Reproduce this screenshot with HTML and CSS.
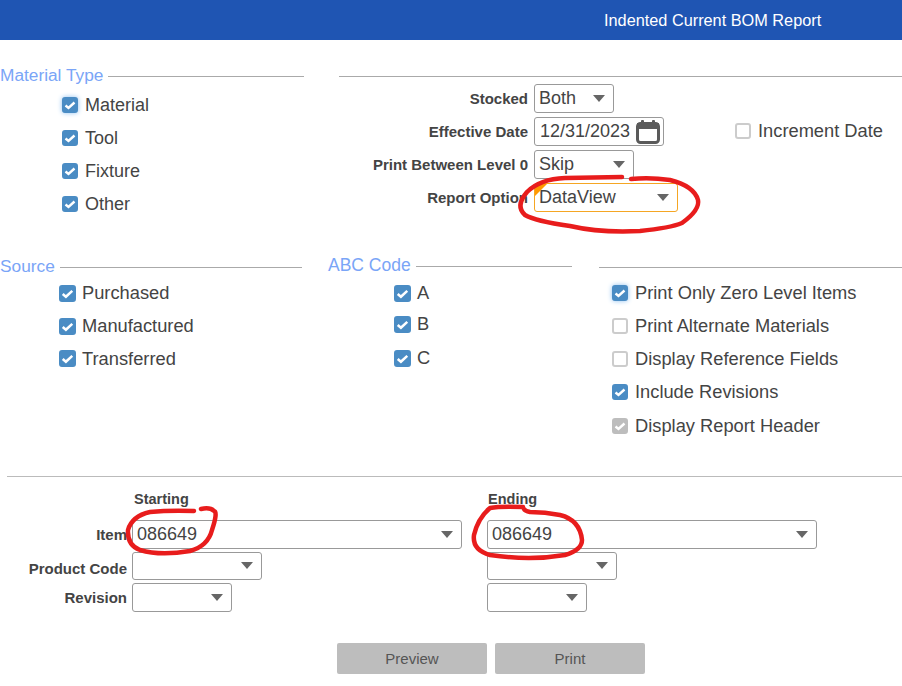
FILE: index.html
```html
<!DOCTYPE html>
<html lang="en">
<head>
    <meta charset="UTF-8">
    <meta name="viewport" content="width=device-width, initial-scale=1.0">
    <title>Indented Current BOM Report</title>
    <link rel="stylesheet" href="styles.css">
</head>
<body>
    <svg class="defs" aria-hidden="true">
        <symbol id="tick" viewBox="0 0 16 16">
            <path d="M3.5 8.5 L6.5 11 L12.5 5.5" fill="none" stroke="#fff" stroke-width="2.4"/>
        </symbol>
    </svg>

    <div class="header">Indented Current BOM Report</div>

    <form class="report">
        <div class="top">
            <div>
                <div class="legend"><span>Material Type</span></div>
                <div class="checks material">
                    <label class="check"><span class="box on focus"><svg><use href="#tick"/></svg></span>Material</label>
                    <label class="check"><span class="box on"><svg><use href="#tick"/></svg></span>Tool</label>
                    <label class="check"><span class="box on"><svg><use href="#tick"/></svg></span>Fixture</label>
                    <label class="check"><span class="box on"><svg><use href="#tick"/></svg></span>Other</label>
                </div>
            </div>
            <div>
                <div class="legend"></div>
                <div class="options">
                    <span class="field-label">Stocked</span>
                    <div class="select w80"><span>Both</span><i class="caret"></i></div>
                    <span></span>

                    <span class="field-label">Effective Date</span>
                    <div class="select date">
                        <span>12/31/2023</span>
                        <svg class="calendar" width="24" height="24" viewBox="0 0 24 24">
                            <rect x="1.5" y="3.5" width="21" height="19" rx="3" fill="#fff" stroke="#5a5a5a" stroke-width="3"/>
                            <rect x="1" y="3" width="22" height="6" fill="#5a5a5a"/>
                            <rect x="5" y="0" width="3" height="5" rx="1" fill="#5a5a5a"/>
                            <rect x="16" y="0" width="3" height="5" rx="1" fill="#5a5a5a"/>
                        </svg>
                    </div>
                    <label class="check wide"><span class="box"></span>Increment Date</label>

                    <span class="field-label">Print Between Level 0</span>
                    <div class="select w100"><span>Skip</span><i class="caret"></i></div>
                    <span></span>

                    <span class="field-label">Report Option</span>
                    <div class="select report-option"><span>DataView</span><i class="caret"></i></div>
                    <span></span>
                </div>
            </div>
        </div>

        <div class="middle">
            <div>
                <div class="legend"><span>Source</span></div>
                <div class="checks source">
                    <label class="check"><span class="box on"><svg><use href="#tick"/></svg></span>Purchased</label>
                    <label class="check"><span class="box on"><svg><use href="#tick"/></svg></span>Manufactured</label>
                    <label class="check"><span class="box on"><svg><use href="#tick"/></svg></span>Transferred</label>
                </div>
            </div>
            <div>
                <div class="legend abc-legend"><span>ABC Code</span></div>
                <div class="checks abc">
                    <label class="check"><span class="box on"><svg><use href="#tick"/></svg></span>A</label>
                    <label class="check"><span class="box on"><svg><use href="#tick"/></svg></span>B</label>
                    <label class="check"><span class="box on"><svg><use href="#tick"/></svg></span>C</label>
                </div>
            </div>
            <div>
                <div class="legend"></div>
                <div class="checks print">
                    <label class="check"><span class="box on focus"><svg><use href="#tick"/></svg></span>Print Only Zero Level Items</label>
                    <label class="check"><span class="box"></span>Print Alternate Materials</label>
                    <label class="check"><span class="box"></span>Display Reference Fields</label>
                    <label class="check"><span class="box on"><svg><use href="#tick"/></svg></span>Include Revisions</label>
                    <label class="check"><span class="box disabled"><svg><use href="#tick"/></svg></span>Display Report Header</label>
                </div>
            </div>
        </div>

        <div class="range">
            <span></span>
            <b class="range-head">Starting</b>
            <b class="range-head ending">Ending</b>

            <span class="field-label">Item</span>
            <div class="select w330"><span>086649</span><i class="caret"></i></div>
            <div class="select w330"><span>086649</span><i class="caret"></i></div>

            <span class="field-label low">Product Code</span>
            <div class="select w130"><i class="caret"></i></div>
            <div class="select w130"><i class="caret"></i></div>

            <span class="field-label">Revision</span>
            <div class="select w100"><i class="caret"></i></div>
            <div class="select w100"><i class="caret"></i></div>
        </div>

        <div class="buttons">
            <button type="button">Preview</button>
            <button type="button">Print</button>
        </div>
    </form>

    <!-- red pen marks drawn over the screenshot -->
    <svg class="marks" width="902" height="686" viewBox="0 0 902 686">
        <path d="M622 177 L565 178 Q540 179 527 192 Q515 206 525 215 Q535 221 570 226 Q600 233 640 231 Q670 228 682 223 Q700 210 698 200 Q694 186 670 180 Q650 177 631 179"/>
        <path d="M194 511 Q170 510 150 512 Q132 516 128 530 Q127 545 140 550 Q160 556 190 551 Q208 546 212 530 Q218 512 214 511 Q210 507 201 509"/>
        <path d="M523 507 Q500 506 490 508 Q478 518 474 535 Q472 550 490 555 Q530 561 565 555 Q582 550 582 540 Q580 520 560 515 Q545 512 530 512 Q525 511 524 509"/>
    </svg>
</body>
</html>
```

FILE: styles.css
```css
body {
    position: relative;
    margin: 0;
    font-family: "Liberation Sans", Arial, sans-serif;
    font-size: 18px;
    color: #444;
    background: #fff;
}
.defs {
    display: none;
}
.header {
    height: 40px;
    padding-left: 604px;
    line-height: 40px;
    font-size: 16.3px;
    color: #fff;
    background-color: #1f55b3;
}

.legend {
    display: flex;
    align-items: center;
    gap: 5px;
    height: 20px;
    font-size: 17.3px;
    color: #7aa5f7;
}
.legend span {
    margin-bottom: 2px;
}
.legend::after {
    content: "";
    flex: 1;
    border-top: 1px solid #aaa;
}
.abc-legend {
    margin-top: -1px;
    margin-bottom: 1px;
    margin-right: 1px;
    font-size: 17.5px;
}

.top {
    display: grid;
    grid-template-columns: 304px 1fr;
    column-gap: 35px;
    margin-top: 26px;
}
.middle {
    display: grid;
    grid-template-columns: 302px 245px 1fr;
    column-gap: 26px;
    margin-top: 36.5px;
}

.checks {
    display: flex;
    flex-direction: column;
}
.check {
    display: flex;
    align-items: center;
    gap: 7px;
    height: 33px;
}
.box {
    flex: none;
    box-sizing: border-box;
    width: 16px;
    height: 16px;
    border: 2px solid #ccc;
    border-radius: 3px;
    background: #fff;
}
.box svg {
    display: block;
    width: 16px;
    height: 16px;
    margin: -2px;
}
.box.on {
    border-color: #4a8cc4;
    background: #4a8cc4;
}
.box.focus {
    box-shadow: 0 0 5px #8fc1f0;
}
.box.disabled {
    border-color: #bdbdbd;
    background: #bdbdbd;
}
.material {
    margin-top: 2.5px;
    padding-left: 62px;
}
.source,
.abc {
    margin-top: -0.5px;
    font-size: 18.3px;
}
.source .box,
.abc .box {
    width: 17px;
    height: 17px;
}
.source .box svg,
.abc .box svg {
    width: 17px;
    height: 17px;
}
.source {
    padding-left: 59px;
}
.source .check {
    gap: 6px;
}
.source .check:nth-child(3) {
    height: 32px;
}
.abc {
    padding-left: 66px;
}
.abc .check {
    gap: 6px;
}
.abc .check:nth-child(2) {
    height: 29px;
}
.abc .check:nth-child(3) {
    margin-top: 3px;
}
.print {
    margin-top: -0.5px;
    padding-left: 13px;
    font-size: 18.3px;
}
.print .check:nth-child(5) {
    margin-top: 1px;
}
.wide {
    font-size: 18.3px;
}

.options {
    display: grid;
    grid-template-columns: 189px 195px 1fr;
    grid-auto-rows: 33px;
    column-gap: 6px;
    align-items: center;
    margin-top: -4px;
}
.field-label {
    font-size: 15px;
    font-weight: bold;
    text-align: right;
}
.options .check {
    height: auto;
    margin-bottom: 2px;
}

.select {
    position: relative;
    display: flex;
    align-items: center;
    justify-content: space-between;
    box-sizing: border-box;
    height: 29px;
    padding: 0 8px 0 4px;
    border: 1px solid #999;
    border-radius: 3px;
    background: #fff;
}
.caret {
    margin-left: auto;
    border-left: 6px solid transparent;
    border-right: 6px solid transparent;
    border-top: 7px solid #666;
}
.w80 { width: 80px; }
.w100 { width: 100px; }
.w130 { width: 130px; }
.w330 { width: 330px; }
.date {
    width: 130px;
    padding: 0 3px 0 5px;
}
.report-option {
    width: 144px;
    border-color: #f5a623;
}
/* little orange corner flag */
.report-option::before {
    content: "";
    position: absolute;
    top: 0;
    left: 0;
    border-top: 12px solid #f90;
    border-right: 12px solid transparent;
}

.range {
    display: grid;
    grid-template-columns: 120px 350px 1fr;
    grid-template-rows: 26px 28.5px 28.5px 28.5px;
    row-gap: 3px;
    column-gap: 5px;
    align-items: center;
    margin: 33.5px 0 0 7px;
    padding-top: 14px;
    border-top: 1px solid #bbb;
}
.range .select {
    height: 28.5px;
}
.range-head {
    align-self: start;
    padding-left: 2px;
    font-size: 14.5px;
}
.range-head.ending {
    padding-left: 1px;
}
.field-label.low {
    padding-top: 5px;
}

.buttons {
    display: flex;
    gap: 8px;
    margin-top: 31.5px;
    padding-left: 337px;
}
button {
    width: 150px;
    height: 31px;
    padding: 0;
    border: none;
    border-radius: 2px;
    font-family: "Liberation Sans", Arial, sans-serif;
    font-size: 15px;
    color: #555;
    background-color: #bdbdbd;
}

.marks {
    position: absolute;
    top: 0;
    left: 0;
    pointer-events: none;
}
.marks path {
    fill: none;
    stroke: #e81c1c;
    stroke-width: 4.5;
    stroke-linecap: round;
    stroke-linejoin: round;
}
```
